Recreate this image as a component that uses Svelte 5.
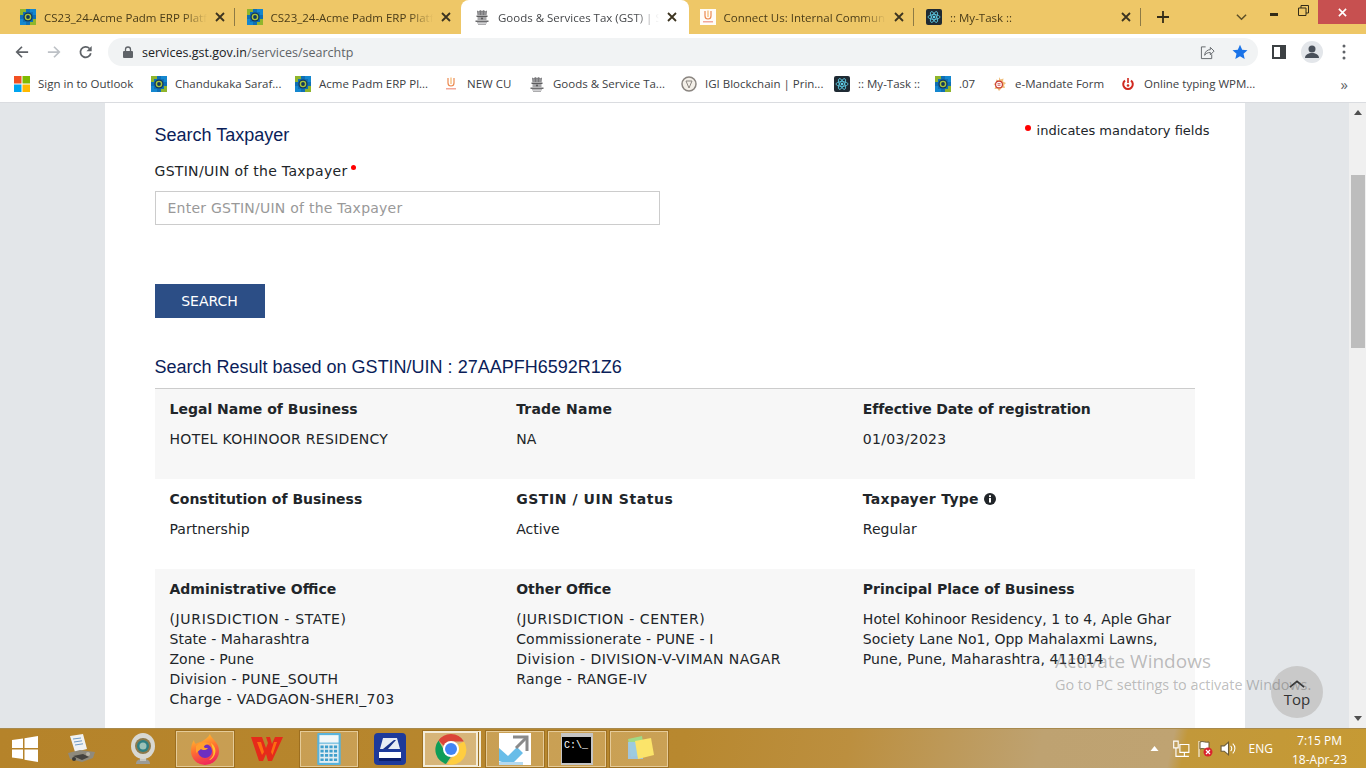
<script>
  const tabs = [
    { icon: 'erp', title: 'CS23_24-Acme Padm ERP Platform' },
    { icon: 'erp', title: 'CS23_24-Acme Padm ERP Platform' },
    { icon: 'emblem', title: 'Goods & Services Tax (GST) | Search', active: true },
    { icon: 'cu', title: 'Connect Us: Internal Communication' },
    { icon: 'react', title: ':: My-Task ::' }
  ];

  const bookmarks = [
    { icon: 'ms', label: 'Sign in to Outlook', w: 137 },
    { icon: 'erp', label: 'Chandukaka Saraf...', w: 144 },
    { icon: 'erp', label: 'Acme Padm ERP Pl...', w: 148 },
    { icon: 'cu', label: 'NEW CU', w: 86 },
    { icon: 'emblem', label: 'Goods & Service Ta...', w: 152 },
    { icon: 'igi', label: 'IGI Blockchain | Prin...', w: 153 },
    { icon: 'react', label: ':: My-Task ::', w: 101 },
    { icon: 'erp', label: '.07', w: 56 },
    { icon: 'cs', label: 'e-Mandate Form', w: 129 },
    { icon: 'typing', label: 'Online typing WPM...', w: 190 }
  ];

  const rows = [
    [
      { head: 'Legal Name of Business', lines: ['HOTEL KOHINOOR RESIDENCY'] },
      { head: 'Trade Name', lines: ['NA'] },
      { head: 'Effective Date of registration', lines: ['01/03/2023'] }
    ],
    [
      { head: 'Constitution of Business', lines: ['Partnership'] },
      { head: 'GSTIN / UIN Status', lines: ['Active'] },
      { head: 'Taxpayer Type', info: true, lines: ['Regular'] }
    ],
    [
      {
        head: 'Administrative Office',
        lines: ['(JURISDICTION - STATE)', 'State - Maharashtra', 'Zone - Pune', 'Division - PUNE_SOUTH', 'Charge - VADGAON-SHERI_703']
      },
      {
        head: 'Other Office',
        lines: ['(JURISDICTION - CENTER)', 'Commissionerate - PUNE - I', 'Division - DIVISION-V-VIMAN NAGAR', 'Range - RANGE-IV']
      },
      {
        head: 'Principal Place of Business',
        lines: ['Hotel Kohinoor Residency, 1 to 4, Aple Ghar', 'Society Lane No1, Opp Mahalaxmi Lawns,', 'Pune, Pune, Maharashtra, 411014']
      }
    ]
  ];

  const tracking = {
    'HOTEL KOHINOOR RESIDENCY': 0.29,
    '01/03/2023': 0.3,
    '(JURISDICTION - STATE)': 0.64,
    '(JURISDICTION - CENTER)': 0.52,
    'Division - PUNE_SOUTH': 0.24,
    'Charge - VADGAON-SHERI_703': 0.35,
    'Commissionerate - PUNE - I': 0.19,
    'Division - DIVISION-V-VIMAN NAGAR': 0.45,
    'Range - RANGE-IV': 0.31,
    'Pune, Pune, Maharashtra, 411014': 0.1,
    'Trade Name': 0.2,
    'Effective Date of registration': -0.1,
    'GSTIN / UIN Status': 0.55,
    'Taxpayer Type': 0.3
  };
</script>

{#snippet favicon(name)}
  <svg class="fav" viewBox="0 0 16 16">
    {#if name === 'erp'}
      <rect width="16" height="16" fill="#0f6fb5" />
      <path d="M0 0h6v3H3v3H0zM10 13h3v-3h3v6h-6z" fill="#8fb52c" />
      <path d="M10 0h6v6h-3V3h-3zM0 10h3v3h3v3H0z" fill="#1487cf" />
      <circle cx="8" cy="8" r="4.600" fill="#12385c" />
      <circle cx="8" cy="8" r="2.600" fill="none" stroke="#a9c53c" stroke-width="1.400" />
    {:else if name === 'emblem'}
      <path d="M3 1.500l2 1 1-1.500 2 1 2-1 1 1.500 2-1-.5 4.500h-9z" fill="#77777a" />
      <path d="M5 3v3M8 2.500V6M11 3v3" stroke="#c8c8ca" stroke-width=".7" />
      <rect x="2.500" y="6.500" width="11" height="1.500" fill="#5c5c5e" />
      <rect x="3.500" y="8" width="9" height="3" fill="#a5a5a7" />
      <circle cx="8" cy="9.500" r="1.100" fill="#5c5c5e" />
      <rect x="1.500" y="11.500" width="13" height="1.500" fill="#6c6c6e" />
      <path d="M3 13.800h10M4 15.300h8" stroke="#98989a" />
    {:else if name === 'cu'}
      <rect width="16" height="16" fill="#fff" opacity=".95" />
      <path d="M5 2v5c0 2 1.300 3 3 3s3-1 3-3V2" fill="none" stroke="#ec8a50" stroke-width="1.200" />
      <path d="M8 1.500V8" stroke="#f3b46a" stroke-width="1.200" />
      <rect x="3" y="12" width="10" height="1.500" fill="#f2a79a" />
    {:else if name === 'react'}
      <rect width="16" height="16" rx="2" fill="#1f2a33" />
      <g fill="none" stroke="#5fd0ea" stroke-width=".8">
        <ellipse cx="8" cy="8" rx="6" ry="2.400" />
        <ellipse cx="8" cy="8" rx="6" ry="2.400" transform="rotate(60 8 8)" />
        <ellipse cx="8" cy="8" rx="6" ry="2.400" transform="rotate(120 8 8)" />
      </g>
      <circle cx="8" cy="8" r="1.300" fill="#5fd0ea" />
    {:else if name === 'ms'}
      <rect width="7.500" height="7.500" fill="#f25022" />
      <rect x="8.500" width="7.500" height="7.500" fill="#7fba00" />
      <rect y="8.500" width="7.500" height="7.500" fill="#00a4ef" />
      <rect x="8.500" y="8.500" width="7.500" height="7.500" fill="#ffb900" />
    {:else if name === 'igi'}
      <circle cx="8" cy="8" r="7" fill="#f3efe8" stroke="#8a8580" stroke-width="1.500" />
      <path d="M5 5h6L8 12z" fill="none" stroke="#8a8580" />
    {:else if name === 'cs'}
      <path d="M8 1l1.500 2.500 3-1-.5 3 3 1.500-2 2 1 3-3-.2L8 15l-1.500-2.200-3 .2 1-3-2-2 3-1.500-.5-3 3 1z" fill="#f0bd78" />
      <circle cx="8" cy="8.500" r="3.400" fill="#fff" stroke="#c8332c" stroke-width="1.100" />
      <path d="M6.500 7.700h3M6.500 9.300h3" stroke="#c8332c" stroke-width=".8" />
    {:else if name === 'typing'}
      <path d="M5 4.500a4.800 4.800 0 1 0 6 0" fill="none" stroke="#d0281f" stroke-width="2" />
      <rect x="7.200" y="2" width="1.600" height="5" fill="#d0281f" />
      <circle cx="8" cy="9.500" r="1.300" fill="#d0281f" />
    {/if}
  </svg>
{/snippet}

<div class="screen">
  <div class="tabstrip">
    {#each tabs as tab, i}
      <div class="tab" class:active={tab.active} class:sep={i === 0 || i === 3 || i === 4}>
        {@render favicon(tab.icon)}
        <span class="tab-title">{tab.title}</span>
        <svg class="tab-x" viewBox="0 0 10 10"><path d="M1 1l8 8M9 1l-8 8" /></svg>
      </div>
    {/each}
    <svg class="plus" viewBox="0 0 12 12"><path d="M6 0v12M0 6h12" /></svg>
    <svg class="chev" viewBox="0 0 12 8"><path d="M1 1.500l5 5 5-5" /></svg>
    <div class="winctl">
      <svg class="min" viewBox="0 0 10 4"><rect width="8" height="3" y="1" /></svg>
      <svg class="restore" viewBox="0 0 11 11"><path d="M.5 3h7.500v7.500H.5zM3 3V.5h7.500V8H8" /></svg>
      <div class="close"><svg viewBox="0 0 10 10"><path d="M1 1l8 8M9 1l-8 8" /></svg></div>
    </div>
  </div>

  <div class="toolbar">
    <svg class="nav" viewBox="0 0 16 16"><path d="M15 8H2M8 2L2 8l6 6" /></svg>
    <svg class="nav off" viewBox="0 0 16 16"><path d="M1 8h13M8 2l6 6-6 6" /></svg>
    <svg class="nav" viewBox="0 0 16 16"><path d="M13.500 9.500A6 6 0 1 1 12 4" /><path class="solid" d="M14.500 1v6h-6z" /></svg>
    <div class="omnibox">
      <svg class="lock" viewBox="0 0 10 12"><path d="M2.500 5V3.500a2.500 2.500 0 0 1 5 0V5" fill="none" stroke="#5f6368" stroke-width="1.300" /><rect y="5" width="10" height="7" rx="1" fill="#5f6368" /></svg>
      <span class="url">services.gst.gov.in<span class="url-path">/services/searchtp</span></span>
      <svg class="share" viewBox="0 0 16 16"><path d="M6 2H1.500v12.500h11V10" /><path d="M5 11c0-4 3-6 6-6V2.500l4 4-4 4V8c-3 0-5 1-6 3z" /></svg>
      <svg class="star" viewBox="0 0 16 16"><path d="M8 .8l2.200 4.900 5.300.5-4 3.600 1.200 5.300L8 12.300l-4.700 2.800 1.200-5.300-4-3.600 5.300-.5z" /></svg>
    </div>
    <svg class="sidepanel" viewBox="0 0 14 14"><path d="M0 0h14v14H0zM2 2v10h6V2z" fill-rule="evenodd" /></svg>
    <div class="avatar"><svg viewBox="0 0 22 22"><circle cx="11" cy="8" r="3.500" /><path d="M4 17c0-3.500 3.500-5 7-5s7 1.500 7 5z" /></svg></div>
    <svg class="menu" viewBox="0 0 4 16"><circle cx="2" cy="2" r="1.500" /><circle cx="2" cy="8" r="1.500" /><circle cx="2" cy="14" r="1.500" /></svg>
  </div>

  <div class="bookmarks">
    {#each bookmarks as b}
      <div class="bookmark" style="width:{b.w}px">
        {@render favicon(b.icon)}
        <span>{b.label}</span>
      </div>
    {/each}
    <span class="more">»</span>
  </div>

  <div class="viewport">
    <div class="gutter"></div>
    <main class="page">
      <div class="title-row">
        <h4>Search Taxpayer</h4>
        <p class="mandatory"><i class="dot"></i>indicates mandatory fields</p>
      </div>
      <label class="field-label" for="gstin">GSTIN/UIN of the Taxpayer<i class="dot small"></i></label>
      <input id="gstin" class="field" placeholder="Enter GSTIN/UIN of the Taxpayer" />
      <button class="search-btn">SEARCH</button>
      <h4 class="result-title">Search Result based on GSTIN/UIN : 27AAPFH6592R1Z6</h4>
      <div class="results">
        {#each rows as row}
          <div class="row">
            {#each row as cell}
              <div class="cell">
                <div class="head" style="letter-spacing:{tracking[cell.head] ?? 0}px">
                  {cell.head}
                  {#if cell.info}
                    <svg class="info" viewBox="0 0 12 12"><circle cx="6" cy="6" r="6" /><rect x="5" y="5" width="2" height="4.500" fill="#fff" /><rect x="5" y="2.300" width="2" height="1.800" fill="#fff" /></svg>
                  {/if}
                </div>
                {#each cell.lines as line}
                  <div class="line" style="letter-spacing:{tracking[line] ?? 0.03}px">{line}</div>
                {/each}
              </div>
            {/each}
          </div>
        {/each}
      </div>
    </main>
    <div class="gutter"></div>
    <div class="scrollbar">
      <svg class="sb-arrow" viewBox="0 0 8 5"><path d="M4 0l4 5H0z" /></svg>
      <div class="sb-track"><div class="sb-thumb"></div></div>
      <svg class="sb-arrow" viewBox="0 0 8 5"><path d="M4 5L0 0h8z" /></svg>
    </div>
    <div class="to-top">
      <svg viewBox="0 0 18 9"><path d="M1 8l8-6.500L17 8" /></svg>
      <span>Top</span>
    </div>
    <div class="activate">
      <div class="a1">Activate Windows</div>
      <div class="a2">Go to PC settings to activate Windows.</div>
    </div>
  </div>

  <footer class="taskbar">
    <svg class="start" viewBox="0 0 26 26"><path d="M0 4l11-1.500V12H0zM12.500 2.300L26 0v12H12.500zM0 13.500h11V23L0 21.500zM12.500 13.500H26V26l-13.500-2.300z" /></svg>
    <div class="task plain first">
      <svg viewBox="0 0 32 32">
        <path d="M5 3l13-2 4 15-12 3z" fill="#f0f1f2" />
        <path d="M8 6l8-1M9 9l8-1.200M10 12l8-1.200" stroke="#6f9ac4" />
        <path d="M3 20l12-3 15 2-2 6-11 4-12-3z" fill="#8f8a7c" />
        <path d="M8 23l9 4 7-3-6-3z" fill="#45433f" />
        <circle cx="9" cy="26" r="2" fill="#3a3a38" />
        <circle cx="23" cy="21" r="2" fill="#b8b4a8" />
      </svg>
    </div>
    <div class="task plain">
      <svg viewBox="0 0 32 32">
        <path d="M9 31c0-4 3-5 7-5s7 1 7 5z" fill="#9b9b96" />
        <rect x="13" y="23" width="6" height="5" fill="#c5c5bf" />
        <ellipse cx="16" cy="13" rx="12" ry="13" fill="#d8d8d2" />
        <circle cx="16" cy="13" r="8" fill="#8c7a4c" />
        <circle cx="16" cy="13" r="6" fill="#2f7f82" />
        <circle cx="16" cy="13" r="3.500" fill="#9cc2b8" />
      </svg>
    </div>
    <div class="task on">
      <svg viewBox="0 0 32 32">
        <defs>
          <linearGradient id="ff" x1="0.200" y1="0" x2="0.500" y2="1"><stop offset="0" stop-color="#ffcb2e" /><stop offset=".5" stop-color="#ff7130" /><stop offset="1" stop-color="#f0265a" /></linearGradient>
        </defs>
        <path d="M21 1c.5 4 9 8 9 17a14 14 0 0 1-28 0c0-5 1-8 3-11 0 2 1 3 2 4 1-1 3-2 5-2 3-2 7-4 9-8z" fill="url(#ff)" />
        <circle cx="16" cy="18" r="7" fill="#6f2fc0" />
        <path d="M7 13c3-4 9-5 14-2-3 0-6 1-6 3 0 1 2 1 4 1-1 2-5 3-7 1l-5 4z" fill="#ffa02e" />
        <path d="M22 10c4 3 6 8 3 13-1 2-3 4-5 4 4-3 5-6 4-10z" fill="#ffc42e" />
      </svg>
    </div>
    <div class="task plain">
      <svg viewBox="0 0 32 32">
        <path d="M0 4h11l4 11 2-5-2-6h4l2 7 3-7h8L21 28h-4l-2-7-3 7H8z" fill="#e62a1a" />
        <path d="M6 9h4l3 10-2 3zM26 9h-3l-3 10 1.500 3z" fill="#fd6d12" />
      </svg>
    </div>
    <div class="task on narrow">
      <svg viewBox="0 0 24 30">
        <rect x="1" y="0" width="22" height="30" rx="1" fill="#58b3dc" />
        <rect x="3" y="2" width="18" height="7" fill="#f2f7f8" />
        <rect x="3" y="10" width="18" height="18" fill="#e3eef2" />
        <path d="M4 13h16M4 17h16M4 21h16M4 25h16" stroke="#3f9fcc" stroke-width="2.400" stroke-dasharray="3 1.200" />
      </svg>
    </div>
    <div class="task plain">
      <svg viewBox="0 0 32 32">
        <rect width="32" height="32" rx="4" fill="#1e3a9a" />
        <path d="M9 5h14l3 11H6z" fill="#e8ecf4" />
        <path d="M9 16l11-9h2L14 16z" fill="#173089" />
        <path d="M5 19h22v6H5z" fill="#fff" />
        <path d="M5 25h22v3H5z" fill="#0d1f6c" />
      </svg>
    </div>
    <div class="task on active">
      <svg viewBox="0 0 32 32">
        <path d="M16 1a15 15 0 0 1 13 7.500H16a7.500 7.500 0 0 0-7 4.500L3.500 7.500A15 15 0 0 1 16 1z" fill="#db4437" />
        <path d="M3.500 7.500L10 19a7.500 7.500 0 0 0 6 4.500L11 31A15 15 0 0 1 3.500 7.500z" fill="#0f9d58" />
        <path d="M29 8.500A15 15 0 0 1 12 31l6.500-8A7.500 7.500 0 0 0 22 12z" fill="#ffcd40" />
        <circle cx="16" cy="16" r="8" fill="#fff" />
        <circle cx="16" cy="16" r="6" fill="#4285f4" />
      </svg>
    </div>
    <div class="stack"></div>
    <div class="task on tile">
      <svg viewBox="0 0 32 32">
        <rect width="32" height="32" fill="#fff" />
        <path d="M0 15l9 8 9-9 6 6-9 9H3l-3-1z" fill="#69bde8" />
        <path d="M14 4h14v14" fill="none" stroke="#8a8a8a" stroke-width="3" />
        <path d="M27 5L17 15" stroke="#8a8a8a" stroke-width="3" />
        <rect y="29" width="24" height="3" fill="#b5d9ee" />
      </svg>
    </div>
    <div class="task on tile">
      <svg viewBox="0 0 32 32">
        <rect width="32" height="32" fill="#c4c4c4" />
        <rect x="1" y="4" width="29" height="26" fill="#000" />
        <text class="cmd-text" x="3" y="15">C:\_</text>
      </svg>
    </div>
    <div class="task on last">
      <svg viewBox="0 0 32 32">
        <path d="M5 6l14-3 3 18-14 3z" fill="#9ce08c" opacity=".9" />
        <path d="M5 9h15v17H5z" fill="#9cc9ea" opacity=".9" />
        <path d="M12 8l16-3 3 17-16 4z" fill="#fbe46a" />
      </svg>
    </div>

    <div class="tray">
      <svg class="t-up" viewBox="0 0 8 5"><path d="M4 0l4 5H0z" /></svg>
      <svg class="t-net" viewBox="0 0 16 16"><path d="M1.500 1h4v6h-4zM7 4h8v7H7zM11 11v3M7 14.500h8M3.500 7v7.500H8" /></svg>
      <svg class="t-flag" viewBox="0 0 16 18"><path d="M2 1v16" /><path class="fill" d="M3 2c3-1.500 5 1 9 0v7c-4 1-6-1.500-9 0z" /><circle cx="11" cy="12" r="4.500" fill="#d9232e" stroke="none" /><path d="M9 10l4 4M13 10l-4 4" stroke-width="1.200" /></svg>
      <svg class="t-vol" viewBox="0 0 16 16"><path class="fill" d="M1 5.500h3L8 2v12L4 10.500H1z" /><path d="M10 5.500a3.500 3.500 0 0 1 0 5M12 3.500a6 6 0 0 1 0 9" /></svg>
      <span class="eng">ENG</span>
      <div class="clock"><div>7:15 PM</div><div>18-Apr-23</div></div>
    </div>
  </footer>
</div>

<style>
  :global(body) {
    margin: 0;
    overflow: hidden;
  }

  .screen {
    width: 1366px;
    height: 768px;
    display: flex;
    flex-direction: column;
    overflow: hidden;
    position: relative;
    font-family: "DejaVu Sans", sans-serif;
  }

  .fav {
    width: 16px;
    height: 16px;
    flex-shrink: 0;
  }

  /* tab strip */
  .tabstrip {
    height: 34px;
    background: #eec767;
    display: flex;
    align-items: stretch;
    padding-left: 8px;
    flex-shrink: 0;
    position: relative;
  }

  .tab {
    width: 226.500px;
    display: flex;
    align-items: center;
    box-sizing: border-box;
    padding: 0 7px 0 12px;
    font: 11.500px "Open Sans", sans-serif;
    color: #4a3c18;
    position: relative;
  }

  .tab.sep::after {
    content: '';
    position: absolute;
    right: 0;
    top: 8px;
    height: 18px;
    width: 1px;
    background: #8d7a45;
  }

  .tab.active {
    background: #fff;
    border-radius: 8px 8px 0 0;
    color: #45474a;
    width: 228px;
    padding-left: 13px;
    padding-right: 9px;
    margin-right: -1.500px;
  }

  .tab-title {
    margin-left: 8px;
    flex: 1;
    white-space: nowrap;
    overflow: hidden;
    -webkit-mask-image: linear-gradient(to right, #000 85%, transparent 100%);
    mask-image: linear-gradient(to right, #000 85%, transparent 100%);
  }

  .tab-x {
    width: 10px;
    height: 10px;
    margin-left: 8px;
    margin-right: 3px;
    fill: none;
    stroke: #3c3420;
    stroke-width: 1.800;
  }

  .plus {
    width: 12px;
    height: 12px;
    margin: 11px 0 0 16px;
    fill: none;
    stroke: #332c18;
    stroke-width: 1.800;
  }

  .chev {
    width: 11px;
    height: 8px;
    margin: 13px 0 0 67px;
    fill: none;
    stroke: #5c4f28;
    stroke-width: 1.600;
  }

  .winctl {
    position: absolute;
    top: 0;
    right: 0;
    display: flex;
    align-items: flex-start;
  }

  .min {
    width: 10px;
    height: 4px;
    margin: 12px 18px 0 0;
    fill: #332c18;
  }

  .restore {
    width: 11px;
    height: 11px;
    margin: 5px 9px 0 0;
    fill: none;
    stroke: #332c18;
  }

  .close {
    width: 48px;
    height: 24px;
    background: #c75050;
    display: flex;
    align-items: center;
    justify-content: center;
  }

  .close svg {
    width: 9px;
    height: 9px;
    fill: none;
    stroke: #fff;
    stroke-width: 1.800;
  }

  /* toolbar */
  .toolbar {
    height: 34px;
    box-sizing: border-box;
    background: #fff;
    display: flex;
    align-items: center;
    padding: 2px 0 0 15px;
    flex-shrink: 0;
  }

  .nav {
    width: 14px;
    height: 14px;
    margin-right: 18px;
    fill: none;
    stroke: #5f6368;
    stroke-width: 2;
  }

  .nav.off {
    stroke: #bdc1c6;
  }

  .nav .solid {
    fill: #5f6368;
    stroke: none;
  }

  .omnibox {
    width: 1150px;
    height: 28px;
    margin-left: -3px;
    border-radius: 14px;
    background: #f1f3f4;
    display: flex;
    align-items: center;
    padding-left: 15px;
    box-sizing: border-box;
  }

  .lock {
    width: 10px;
    height: 12px;
  }

  .url {
    margin-left: 9px;
    font: 12.500px "Open Sans", sans-serif;
    color: #202124;
    flex: 1;
  }

  .url-path {
    color: #5f6368;
  }

  .share {
    width: 15px;
    height: 15px;
    fill: none;
    stroke: #5f6368;
    margin-right: 17px;
  }

  .star {
    width: 16px;
    height: 16px;
    fill: #1a73e8;
    margin-right: 10px;
  }

  .sidepanel {
    width: 14px;
    height: 14px;
    margin-left: 14px;
    fill: #3c4043;
  }

  .avatar {
    width: 22px;
    height: 22px;
    margin-left: 15px;
    border-radius: 50%;
    background: #e3e6ea;
  }

  .avatar svg {
    display: block;
    fill: #49505a;
  }

  .menu {
    width: 4px;
    height: 16px;
    margin-left: 19px;
    fill: #5f6368;
  }

  /* bookmarks */
  .bookmarks {
    height: 35px;
    background: #fff;
    display: flex;
    align-items: center;
    padding: 0 0 2px 14px;
    box-sizing: border-box;
    border-bottom: 1px solid #dadce0;
    flex-shrink: 0;
    position: relative;
    font: 11.500px "Open Sans", sans-serif;
    color: #3c4043;
  }

  .bookmark {
    display: flex;
    align-items: center;
    gap: 8px;
    white-space: nowrap;
    flex-shrink: 0;
  }

  .bookmark span {
    margin-top: -2px;
  }

  .more {
    position: absolute;
    right: 18px;
    top: 6px;
    font-size: 15px;
    color: #5f6368;
  }

  /* page */
  .viewport {
    flex: 1;
    min-height: 0;
    display: flex;
    position: relative;
    overflow: hidden;
  }

  .gutter {
    flex: 1;
    background: #e3e6e9;
  }

  .page {
    width: 1140px;
    box-sizing: border-box;
    padding: 20px 50px 0;
    background: #fff;
    color: #212529;
    font-size: 14px;
    flex-shrink: 0;
  }

  .title-row {
    display: flex;
    justify-content: space-between;
    margin-right: -15px;
  }

  h4 {
    margin: 0;
    font: 18px/24px "Liberation Sans", Arial, sans-serif;
    color: #0b1e59;
  }

  .mandatory {
    margin: -2px 0 0;
    font-size: 13px;
    line-height: 20px;
  }

  .dot {
    display: inline-block;
    width: 6px;
    height: 6px;
    border-radius: 50%;
    background: #f00;
    margin-right: 6px;
    vertical-align: 4px;
  }

  .dot.small {
    width: 5px;
    height: 5px;
    margin: 0 0 0 3px;
    vertical-align: 6px;
  }

  .field-label {
    display: block;
    margin-top: 13px;
    line-height: 22px;
    letter-spacing: 0.3px;
  }

  .field {
    display: block;
    width: 505px;
    height: 34px;
    margin-top: 9px;
    box-sizing: border-box;
    border: 1px solid #ccc;
    padding: 0 12px;
    font: 14px "DejaVu Sans", sans-serif;
    letter-spacing: 0.24px;
    outline: none;
  }

  .field::placeholder {
    color: #999;
  }

  .search-btn {
    display: block;
    width: 110px;
    height: 34px;
    margin-top: 59px;
    border: none;
    background: #2c4e86;
    color: #fff;
    font: 14px "DejaVu Sans", sans-serif;
    padding: 0;
  }

  .result-title {
    margin-top: 37px;
  }

  .results {
    margin-top: 9px;
    border-top: 1px solid #ccc;
  }

  .row {
    display: grid;
    grid-template-columns: repeat(3, 1fr);
    padding: 10px 0 30px;
  }

  .row:nth-child(odd) {
    background: #f7f7f7;
  }

  .cell {
    padding: 0 15px;
  }

  .head {
    font-weight: 700;
    line-height: 20px;
    margin-bottom: 10px;
    color: #212529;
  }

  .line {
    line-height: 20px;
    white-space: nowrap;
  }

  .info {
    width: 12px;
    height: 12px;
    fill: #212529;
    vertical-align: -1px;
  }

  /* scrollbar */
  .scrollbar {
    width: 17px;
    background: #f0f0f0;
    display: flex;
    flex-direction: column;
    align-items: center;
    flex-shrink: 0;
  }

  .sb-arrow {
    width: 8px;
    height: 5px;
    margin: 7px 0;
    fill: #505050;
    flex-shrink: 0;
  }

  .sb-track {
    flex: 1;
    width: 100%;
    padding-top: 53px;
    box-sizing: border-box;
  }

  .sb-thumb {
    width: 14px;
    height: 173px;
    margin-left: 2px;
    background: #bdbdbd;
  }

  .to-top {
    position: absolute;
    left: 1271px;
    top: 563px;
    width: 52px;
    height: 52px;
    border-radius: 50%;
    background: #c9c9c9;
    display: flex;
    flex-direction: column;
    align-items: center;
    box-sizing: border-box;
    padding-top: 14px;
    font: 15px/17px "Open Sans", sans-serif;
    color: #333;
  }

  .to-top svg {
    width: 16px;
    height: 8px;
    margin-bottom: 3px;
    fill: none;
    stroke: #333;
    stroke-width: 2;
  }

  .activate {
    position: absolute;
    left: 1055px;
    top: 545px;
    color: rgba(90, 90, 90, 0.4);
    font-family: "Open Sans", sans-serif;
    white-space: nowrap;
    pointer-events: none;
  }

  .a1 {
    font-size: 19px;
    line-height: 27px;
  }

  .a2 {
    font-size: 14.400px;
    line-height: 19px;
  }

  /* taskbar */
  .taskbar {
    height: 40px;
    flex-shrink: 0;
    box-sizing: border-box;
    display: flex;
    align-items: center;
    background: linear-gradient(102deg, #b5832a 0%, #b8882f 50%, #bc8f3f 62%, #bea271 76%, #bfa372 85.500%, #c2983a 86.500%, #c69a34 100%);
    border-top: 1px solid #a88a4e;
    padding-left: 12px;
    position: relative;
  }

  .start {
    width: 26px;
    height: 26px;
    fill: #fff;
    margin-right: 24px;
  }

  .task {
    width: 58px;
    height: 36px;
    box-sizing: border-box;
    margin-right: 3px;
    display: flex;
    align-items: center;
    justify-content: center;
    flex-shrink: 0;
  }

  .task svg {
    width: 32px;
    height: 32px;
  }

  .task.plain {
    width: 56px;
    margin-left: 2px;
    margin-right: 5px;
  }

  .task.plain.first {
    width: 46px;
    margin-left: -4px;
    margin-right: 9px;
  }

  .task.narrow {
    margin-right: 2px;
  }

  .task.on {
    border: 1px solid rgba(236, 214, 170, 0.8);
    outline: 1px solid rgba(110, 70, 10, 0.35);
    background: rgba(255, 235, 200, 0.25);
  }

  .task.active {
    width: 55px;
    margin-right: 0;
    border: 2px solid #f3ecd9;
    background: rgba(255, 240, 215, 0.45);
  }

  .task.tile {
    margin-right: 4px;
  }

  .task.tile svg {
    height: 34px;
  }

  .cmd-text {
    font: 10px "Liberation Mono", monospace;
    fill: #fff;
  }

  .stack {
    width: 3px;
    height: 36px;
    margin-right: 5px;
    border-right: 2px solid #f3ecd9;
    border-top: 1px solid #f3ecd9;
    border-bottom: 1px solid #f3ecd9;
    box-sizing: border-box;
  }

  .tray {
    position: absolute;
    right: 0;
    top: 0;
    bottom: 0;
    display: flex;
    align-items: center;
    color: #fff;
    font: 12px "Open Sans", sans-serif;
  }

  .tray svg {
    fill: none;
    stroke: #fff;
    flex-shrink: 0;
  }

  .tray .fill {
    fill: #fff;
    stroke: #6a5a35;
  }

  .tray .t-up {
    width: 9px;
    height: 5px;
    margin-right: 13px;
    fill: #fff;
    stroke: none;
  }

  .t-net {
    width: 18px;
    height: 18px;
    margin-right: 7px;
  }

  .t-flag {
    width: 16px;
    height: 18px;
    margin-right: 7px;
  }

  .t-vol {
    width: 17px;
    height: 17px;
    margin-right: 12px;
  }

  .eng {
    margin-right: 16px;
  }

  .clock {
    width: 61px;
    text-align: center;
    line-height: 19px;
    margin-right: 16px;
    padding-top: 3px;
  }
</style>
